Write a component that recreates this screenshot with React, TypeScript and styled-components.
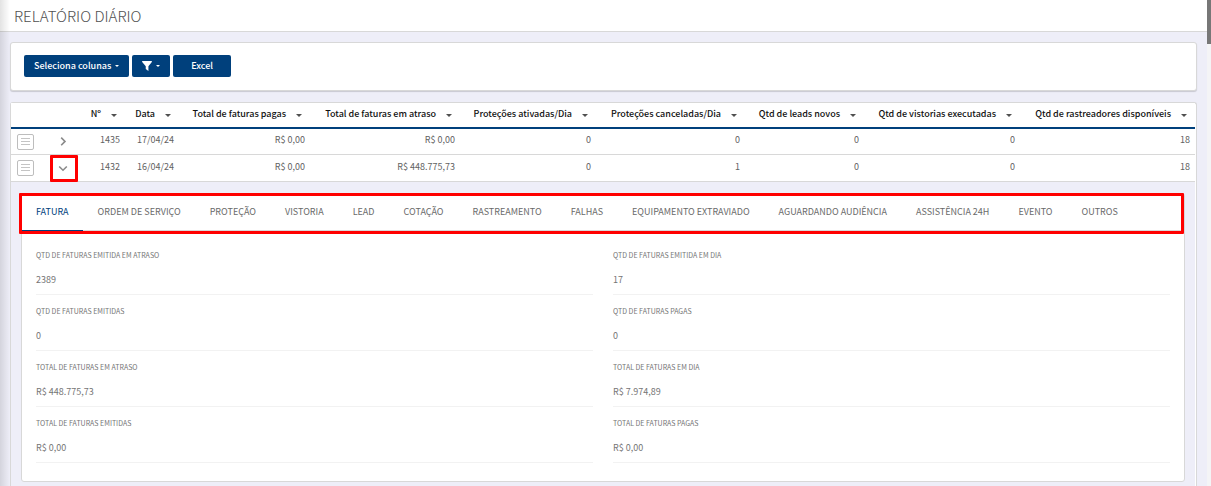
import React, { Fragment, useState } from "react";
import styled, { createGlobalStyle } from "styled-components";

const GlobalStyle = createGlobalStyle`
  *, *::before, *::after { box-sizing: border-box; }
  body {
    margin: 0;
    background: #eeeef8;
    color: #626262;
    font-family: "Noto Sans CJK SC", "Noto Sans", sans-serif;
    font-size: 9px;
    line-height: 14px;
  }
  button { font: inherit; color: inherit; cursor: pointer; }
`;

const Shell = styled.div`
  display: flex;
  min-height: 100vh;
`;

const Page = styled.div`
  flex: 1;
  min-width: 0;
  display: flex;
  flex-direction: column;
`;

const ScrollTrack = styled.div`
  width: 4px;
  background: #f4f4f6;
`;

const ScrollThumb = styled.div`
  height: 44px;
  background: #777;
`;

const SideShade = styled.div`
  position: absolute;
  top: 0;
  bottom: 0;
  left: 0;
  width: 10px;
  pointer-events: none;
  background: linear-gradient(to right, rgba(0, 0, 0, 0.11), rgba(0, 0, 0, 0));
`;

const TopBar = styled.header`
  display: flex;
  align-items: center;
  height: 32px;
  padding: 0 14px;
  background: #fff;
  border-bottom: 1px solid #d8d8d8;
`;

const Title = styled.h1`
  margin: 0;
  color: #505050;
  font-size: 15px;
  font-weight: 300;
  line-height: 20px;
`;

const Main = styled.main`
  flex: 1;
  display: flex;
  flex-direction: column;
  gap: 11px;
  padding: 10px 10px 0;
`;

const Toolbar = styled.section`
  display: flex;
  gap: 3px;
  padding: 12px 13px 13px;
  background: #fff;
  border: 1px solid #d8d8d8;
  border-radius: 3px;
  box-shadow: 0 1px 1px rgba(0, 0, 0, 0.16);
`;

const ToolButton = styled.button<{ $wide?: boolean }>`
  display: flex;
  align-items: center;
  gap: 4px;
  height: 22px;
  padding: 0 ${(p) => (p.$wide ? 18 : 10)}px;
  border: 0;
  border-radius: 2px;
  background: #00407c;
  color: #fff;
  font-weight: 500;
`;

const Report = styled.section`
  flex: 1;
  padding-right: 1px;
  background: linear-gradient(to left, #fff 1px, #eeeef8 1px);
  border: 1px solid #d8d8d8;
  border-bottom: 0;
  border-radius: 3px 3px 0 0;
`;

const Table = styled.table`
  width: 100%;
  table-layout: fixed;
  border-collapse: separate;
  border-spacing: 0;
`;

const HeadCell = styled.th`
  height: 26px;
  padding: 0 8px 2px 0;
  background: #fff;
  border-bottom: 2px solid #00407c;
  color: #111;
  font-weight: 500;
  text-align: right;
  white-space: nowrap;
`;

const SortButton = styled.button`
  display: inline-flex;
  align-items: center;
  gap: 10px;
  padding: 0;
  border: 0;
  background: none;
  font-weight: 500;

  svg {
    margin-top: 3px;
    color: #505050;
  }
`;

const Cell = styled.td<{ $open?: boolean }>`
  position: relative;
  height: ${(p) => (p.$open ? 27 : 26)}px;
  padding: ${(p) => (p.$open ? 1 : 0)}px 5px 3px 0;
  background: #fff;
  border-bottom: 1px solid #d8d8d8;
  text-align: right;
  white-space: nowrap;
`;

const IconCell = styled(Cell)`
  padding: 0;
  text-align: center;
`;

const MenuButton = styled.button`
  display: block;
  width: 17px;
  height: 16px;
  margin-left: 6px;
  padding: 0;
  border: 1px solid #bdbdbd;
  border-radius: 2px;
  background: #fff;
`;

const ExpandButton = styled.button`
  display: block;
  width: 100%;
  height: 16px;
  padding: 0;
  border: 0;
  background: none;
`;

const Drawing = styled.svg`
  display: block;
  margin: auto;
`;

const Highlight = styled.span<{ $around: "toggle" | "tabs" }>`
  position: absolute;
  inset: ${(p) => (p.$around === "toggle" ? "0 3px -1px 5px" : "-1px 0 -4px -3px")};
  border: 3px solid #f00;
  border-radius: 1px;
  pointer-events: none;
`;

const DetailCell = styled.td`
  padding: 11px 10px 4px 10px;
  background: #eeeef8;
`;

const DetailCard = styled.div`
  background: #fff;
  border: 1px solid #d8d8d8;
  border-radius: 3px;
`;

const TabBar = styled.div`
  position: relative;
  display: flex;
  gap: 1px;
  border-bottom: 1px solid #d8d8d8;
`;

const Tab = styled.button<{ $active: boolean }>`
  height: 37px;
  margin-bottom: -1px;
  padding: 0 14px;
  border: 0;
  border-bottom: 1px solid ${(p) => (p.$active ? "#00407c" : "transparent")};
  background: none;
  color: ${(p) => (p.$active ? "#00407c" : "#6a6a6a")};
  font-weight: 400;
  white-space: nowrap;
`;

const Fields = styled.dl`
  display: grid;
  grid-template-columns: 1fr 1fr;
  column-gap: 20px;
  margin: 0;
  padding: 8px 14px 18px;
`;

const Field = styled.div`
  height: 56px;
  padding-top: 10px;
  border-bottom: 1px solid #f2f2f2;
  color: #757575;
`;

const FieldLabel = styled.dt`
  font-size: 7px;
  line-height: 12px;
`;

const FieldValue = styled.dd`
  margin: 12px 0 0;
`;

const Caret = ({ size = 6 }: { size?: number }) => (
  <svg width={size} height={size / 2} viewBox="0 0 6 3" aria-hidden="true">
    <path d="M0 0h6L3 3z" fill="currentColor" />
  </svg>
);

const FilterIcon = () => (
  <svg width="10" height="10" viewBox="0 0 12 10" preserveAspectRatio="none" aria-hidden="true">
    <path d="M.6 0h10.8c.5 0 .7.5.4.9L7.7 5.2V10L4.5 7.9V5.2L.2.9C-.1.5.1 0 .6 0z" fill="#fff" />
  </svg>
);

const MenuIcon = () => (
  <Drawing width="9" height="8" viewBox="0 0 9 8" aria-hidden="true">
    <path d="M0 .5h9M0 3.5h9M0 6.5h9" stroke="#c4c4c4" />
  </Drawing>
);

const Chevron = ({ open }: { open: boolean }) => (
  <Drawing width="10" height="10" viewBox="0 0 10 10" aria-hidden="true">
    <path
      d={open ? "M1.2 3.5L5 7.2l3.8-3.7" : "M3.2.6L7 4.4 3.2 8.2"}
      fill="none"
      stroke="#8a8a8a"
      strokeWidth="1.6"
    />
  </Drawing>
);

const columns = [
  { title: "Nº", width: 44 },
  { title: "Data", width: 54 },
  { title: "Total de faturas pagas", width: 131 },
  { title: "Total de faturas em atraso", width: 150 },
  { title: "Proteções ativadas/Dia", width: 136 },
  { title: "Proteções canceladas/Dia", width: 149 },
  { title: "Qtd de leads novos", width: 119 },
  { title: "Qtd de vistorias executadas", width: 156 },
  { title: "Qtd de rastreadores disponíveis", width: 175 },
];

const rows = [
  ["1435", "17/04/24", "R$ 0,00", "R$ 0,00", "0", "0", "0", "0", "18"],
  ["1432", "16/04/24", "R$ 0,00", "R$ 448.775,73", "0", "1", "0", "0", "18"],
];

const tabs = [
  "FATURA", "ORDEM DE SERVIÇO", "PROTEÇÃO", "VISTORIA", "LEAD", "COTAÇÃO",
  "RASTREAMENTO", "FALHAS", "EQUIPAMENTO EXTRAVIADO", "AGUARDANDO AUDIÊNCIA",
  "ASSISTÊNCIA 24H", "EVENTO", "OUTROS",
];

const fields = [
  ["QTD DE FATURAS EMITIDA EM ATRASO", "2389"],
  ["QTD DE FATURAS EMITIDA EM DIA", "17"],
  ["QTD DE FATURAS EMITIDAS", "0"],
  ["QTD DE FATURAS PAGAS", "0"],
  ["TOTAL DE FATURAS EM ATRASO", "R$ 448.775,73"],
  ["TOTAL DE FATURAS EM DIA", "R$ 7.974,89"],
  ["TOTAL DE FATURAS EMITIDAS", "R$ 0,00"],
  ["TOTAL DE FATURAS PAGAS", "R$ 0,00"],
];

function Details() {
  const [active, setActive] = useState(tabs[0]);
  return (
    <DetailCard>
      <TabBar role="tablist">
        {tabs.map((tab) => (
          <Tab
            key={tab}
            role="tab"
            aria-selected={tab === active}
            $active={tab === active}
            onClick={() => setActive(tab)}
          >
            {tab}
          </Tab>
        ))}
        <Highlight $around="tabs" />
      </TabBar>
      <Fields>
        {fields.map(([label, value]) => (
          <Field key={label}>
            <FieldLabel>{label}</FieldLabel>
            <FieldValue>{value}</FieldValue>
          </Field>
        ))}
      </Fields>
    </DetailCard>
  );
}

export default function App() {
  const [openRow, setOpenRow] = useState("1432");
  return (
    <>
      <GlobalStyle />
      <Shell>
        <Page>
          <TopBar>
            <Title>RELATÓRIO DIÁRIO</Title>
          </TopBar>
          <Main>
            <Toolbar>
              <ToolButton>
                Seleciona colunas <Caret size={4} />
              </ToolButton>
              <ToolButton aria-label="Filtrar">
                <FilterIcon /> <Caret size={4} />
              </ToolButton>
              <ToolButton $wide>Excel</ToolButton>
            </Toolbar>
            <Report>
              <Table>
                <colgroup>
                  <col width={34} />
                  <col width={36} />
                  {columns.map((c) => (
                    <col key={c.title} width={c.width} />
                  ))}
                </colgroup>
                <thead>
                  <tr>
                    <HeadCell />
                    <HeadCell />
                    {columns.map((c) => (
                      <HeadCell key={c.title} scope="col">
                        <SortButton>
                          {c.title}
                          <Caret />
                        </SortButton>
                      </HeadCell>
                    ))}
                  </tr>
                </thead>
                <tbody>
                  {rows.map((row) => {
                    const open = row[0] === openRow;
                    return (
                      <Fragment key={row[0]}>
                        <tr>
                          <IconCell $open={open}>
                            <MenuButton aria-label="Ações">
                              <MenuIcon />
                            </MenuButton>
                          </IconCell>
                          <IconCell $open={open}>
                            <ExpandButton
                              aria-label="Detalhes"
                              aria-expanded={open}
                              onClick={() => setOpenRow(open ? "" : row[0])}
                            >
                              <Chevron open={open} />
                            </ExpandButton>
                            {open && <Highlight $around="toggle" />}
                          </IconCell>
                          {row.map((value, i) => (
                            <Cell key={i} $open={open}>
                              {value}
                            </Cell>
                          ))}
                        </tr>
                        {open && (
                          <tr>
                            <DetailCell colSpan={columns.length + 2}>
                              <Details />
                            </DetailCell>
                          </tr>
                        )}
                      </Fragment>
                    );
                  })}
                </tbody>
              </Table>
            </Report>
          </Main>
        </Page>
        <ScrollTrack>
          <ScrollThumb />
        </ScrollTrack>
        <SideShade />
      </Shell>
    </>
  );
}
